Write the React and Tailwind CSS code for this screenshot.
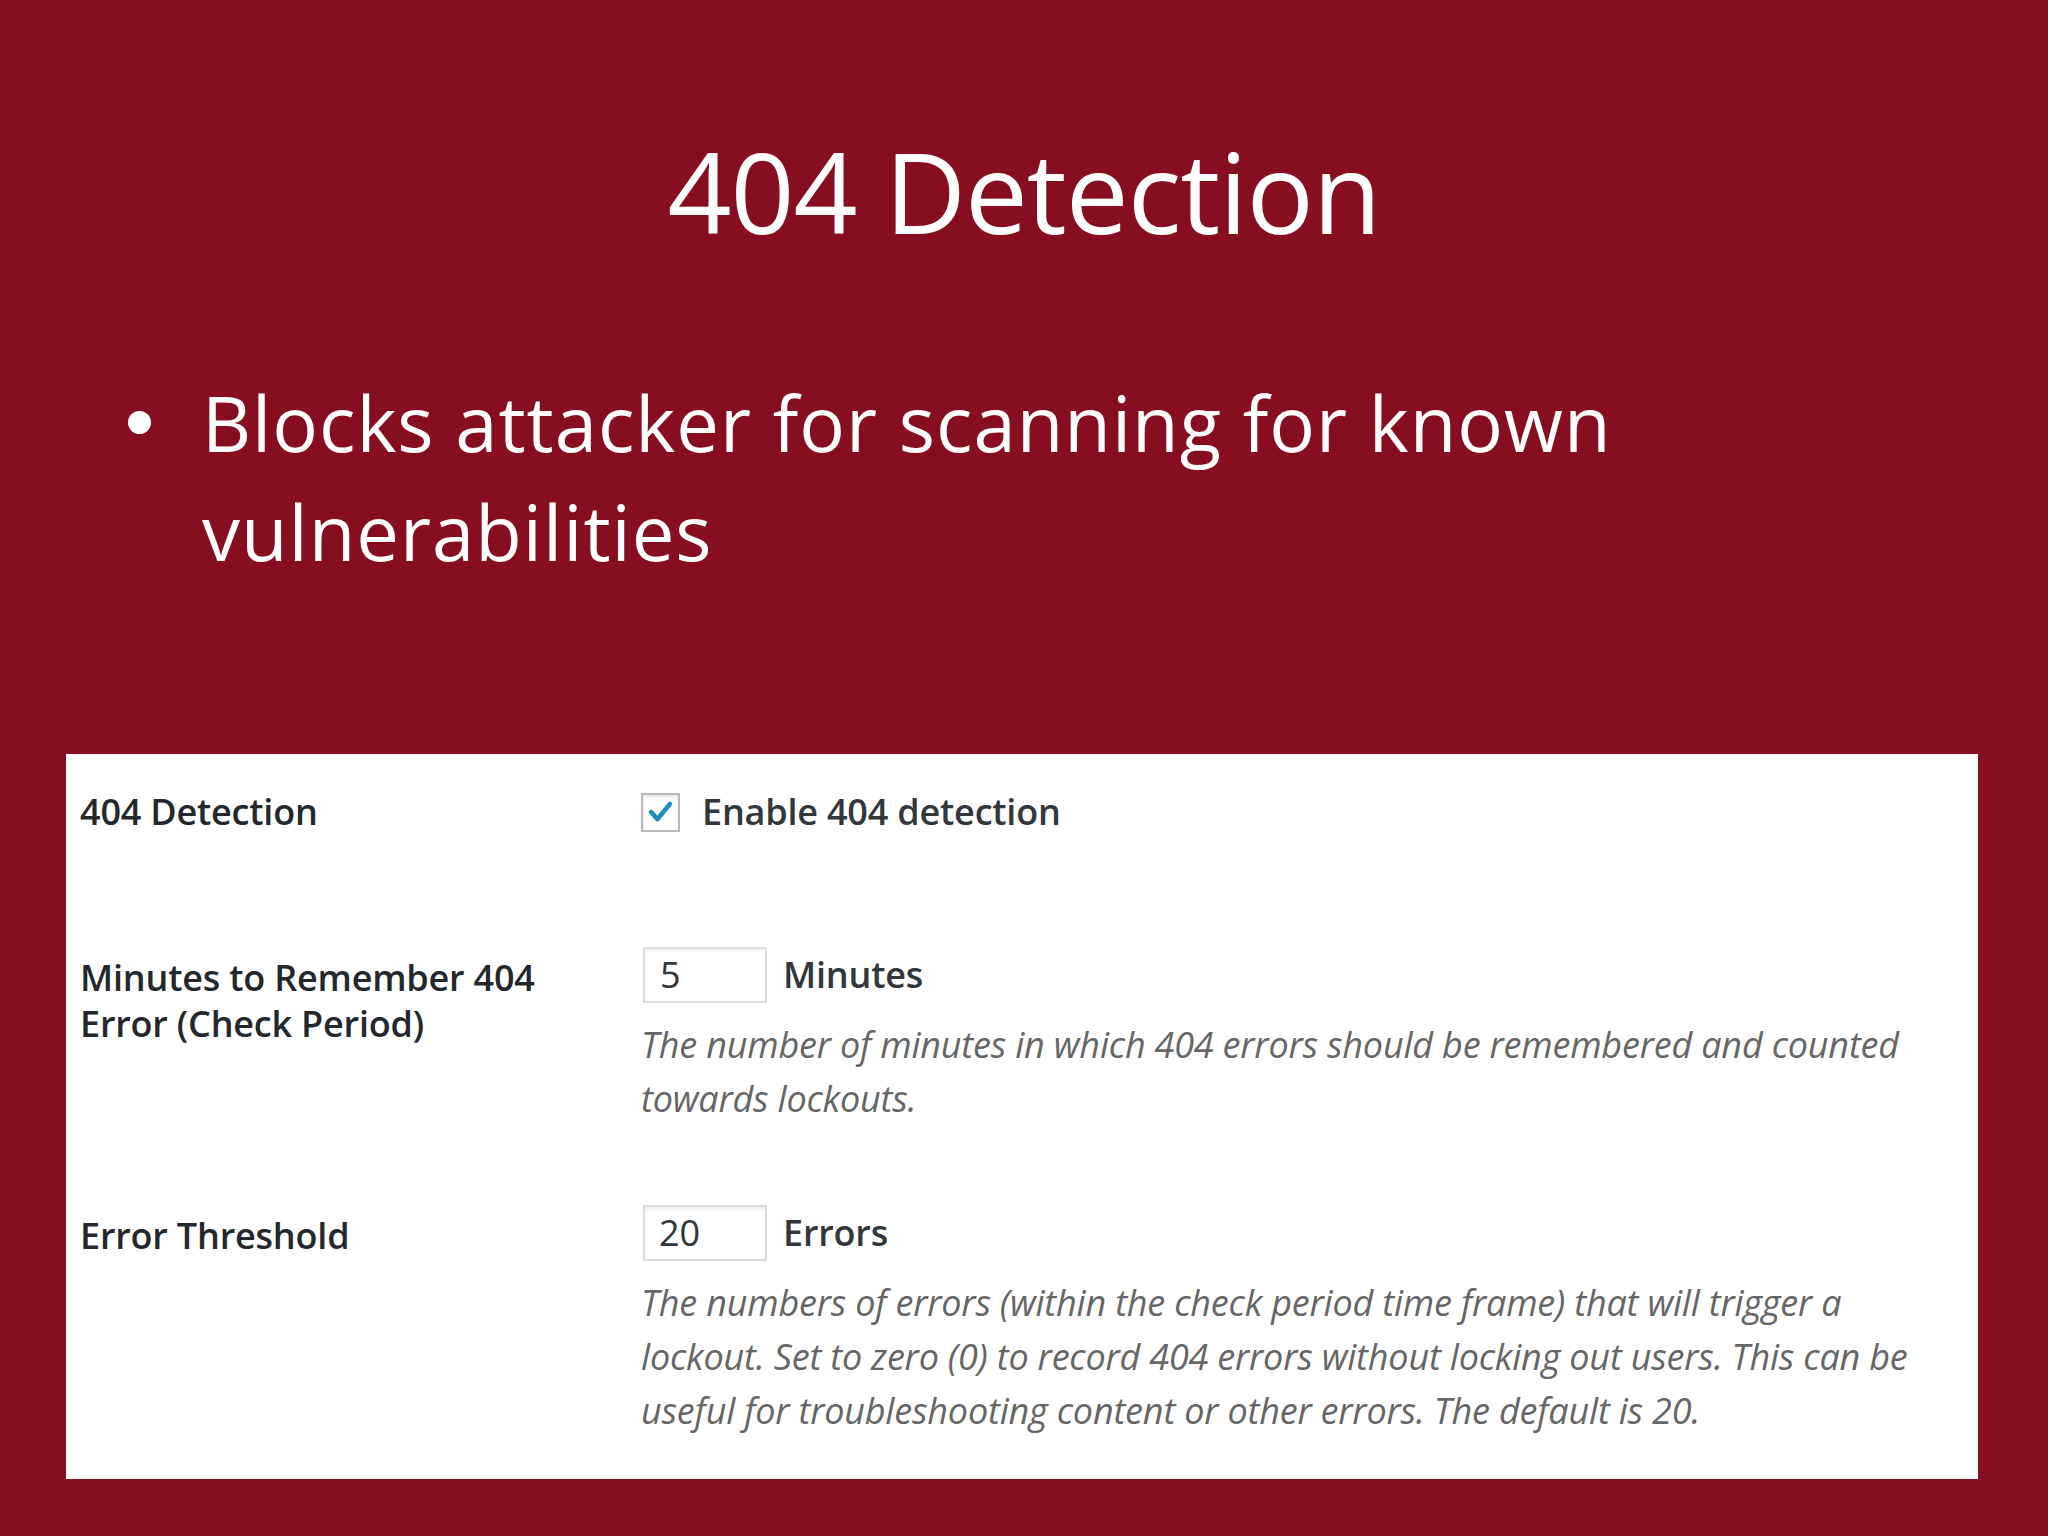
import React from "react";

const sans = { fontFamily: '"Open Sans", "Noto Sans", sans-serif' };

export default function App() {
  return (
    <div
      className="w-[2048px] h-[1536px] bg-[#870d21] flex flex-col overflow-hidden"
      style={sans}
    >
      {/* Title */}
      <h1 className="mt-[124px] text-center text-white text-[112px] leading-[134px] font-normal tracking-[-1px]">
        404 Detection
      </h1>

      {/* Bullet */}
      <div className="mt-[110px] pl-[128px] flex items-start">
        <div className="w-[23px] h-[23px] rounded-full bg-white mt-[43px] shrink-0" />
        <p className="ml-[51px] text-white text-[76px] leading-[109px] font-normal tracking-[1px]">
          Blocks attacker for scanning for known
          <br />
          vulnerabilities
        </p>
      </div>

      {/* Screenshot panel */}
      <div className="mt-[168px] ml-[66px] w-[1912px] h-[725px] bg-white pl-[14px] pt-[35px] text-[36px] text-[#23282d]">
        {/* Row 1 */}
        <div className="grid grid-cols-[561px_1fr]">
          <div className="leading-[46px] font-semibold tracking-[-0.2px]">404 Detection</div>
          <div className="flex items-center h-[46px]">
            <div className="w-[39px] h-[39px] border-2 border-[#b4b9be] bg-white shadow-[inset_0_2px_3px_rgba(0,0,0,0.1)] flex items-center justify-center">
              <svg width="39" height="39" viewBox="0 0 39 39">
                <polyline
                  points="9,19 16,27 30,10"
                  fill="none"
                  stroke="#1e8cbe"
                  strokeWidth="5"
                  strokeLinecap="round"
                  strokeLinejoin="round"
                />
              </svg>
            </div>
            <span className="ml-[22px] leading-[46px] font-semibold text-[#32373c] tracking-[-0.2px]">
              Enable 404 detection
            </span>
          </div>
        </div>

        {/* Row 2 */}
        <div className="grid grid-cols-[561px_1fr] mt-[112px]">
          <div className="pt-[8px] leading-[46px] font-semibold tracking-[-0.2px]">
            Minutes to Remember 404
            <br />
            Error (Check Period)
          </div>
          <div className="flex flex-col">
            <div className="flex items-center">
              <div className="ml-[2px] w-[124px] h-[56px] border-2 border-[#dddddd] shadow-[inset_0_2px_3px_rgba(0,0,0,0.07)] flex items-center pl-[15px] leading-[46px] text-[#32373c]">
                5
              </div>
              <span className="ml-[16px] leading-[46px] font-semibold text-[#32373c] tracking-[-0.2px]">
                Minutes
              </span>
            </div>
            <p className="mt-[15px] italic text-[#666666] leading-[54px] tracking-[-0.2px]">
              The number of minutes in which 404 errors should be remembered and counted
              <br />
              towards lockouts.
            </p>
          </div>
        </div>

        {/* Row 3 */}
        <div className="grid grid-cols-[561px_1fr] mt-[79px]">
          <div className="pt-[8px] leading-[46px] font-semibold tracking-[-0.2px]">Error Threshold</div>
          <div className="flex flex-col">
            <div className="flex items-center">
              <div className="ml-[2px] w-[124px] h-[56px] border-2 border-[#dddddd] shadow-[inset_0_2px_3px_rgba(0,0,0,0.07)] flex items-center pl-[14px] leading-[46px] text-[#32373c]">
                20
              </div>
              <span className="ml-[16px] leading-[46px] font-semibold text-[#32373c] tracking-[-0.2px]">
                Errors
              </span>
            </div>
            <p className="mt-[15px] italic text-[#666666] leading-[54px] tracking-[-0.2px]">
              The numbers of errors (within the check period time frame) that will trigger a
              <br />
              lockout. Set to zero (0) to record 404 errors without locking out users. This can be
              <br />
              useful for troubleshooting content or other errors. The default is 20.
            </p>
          </div>
        </div>
      </div>
    </div>
  );
}
